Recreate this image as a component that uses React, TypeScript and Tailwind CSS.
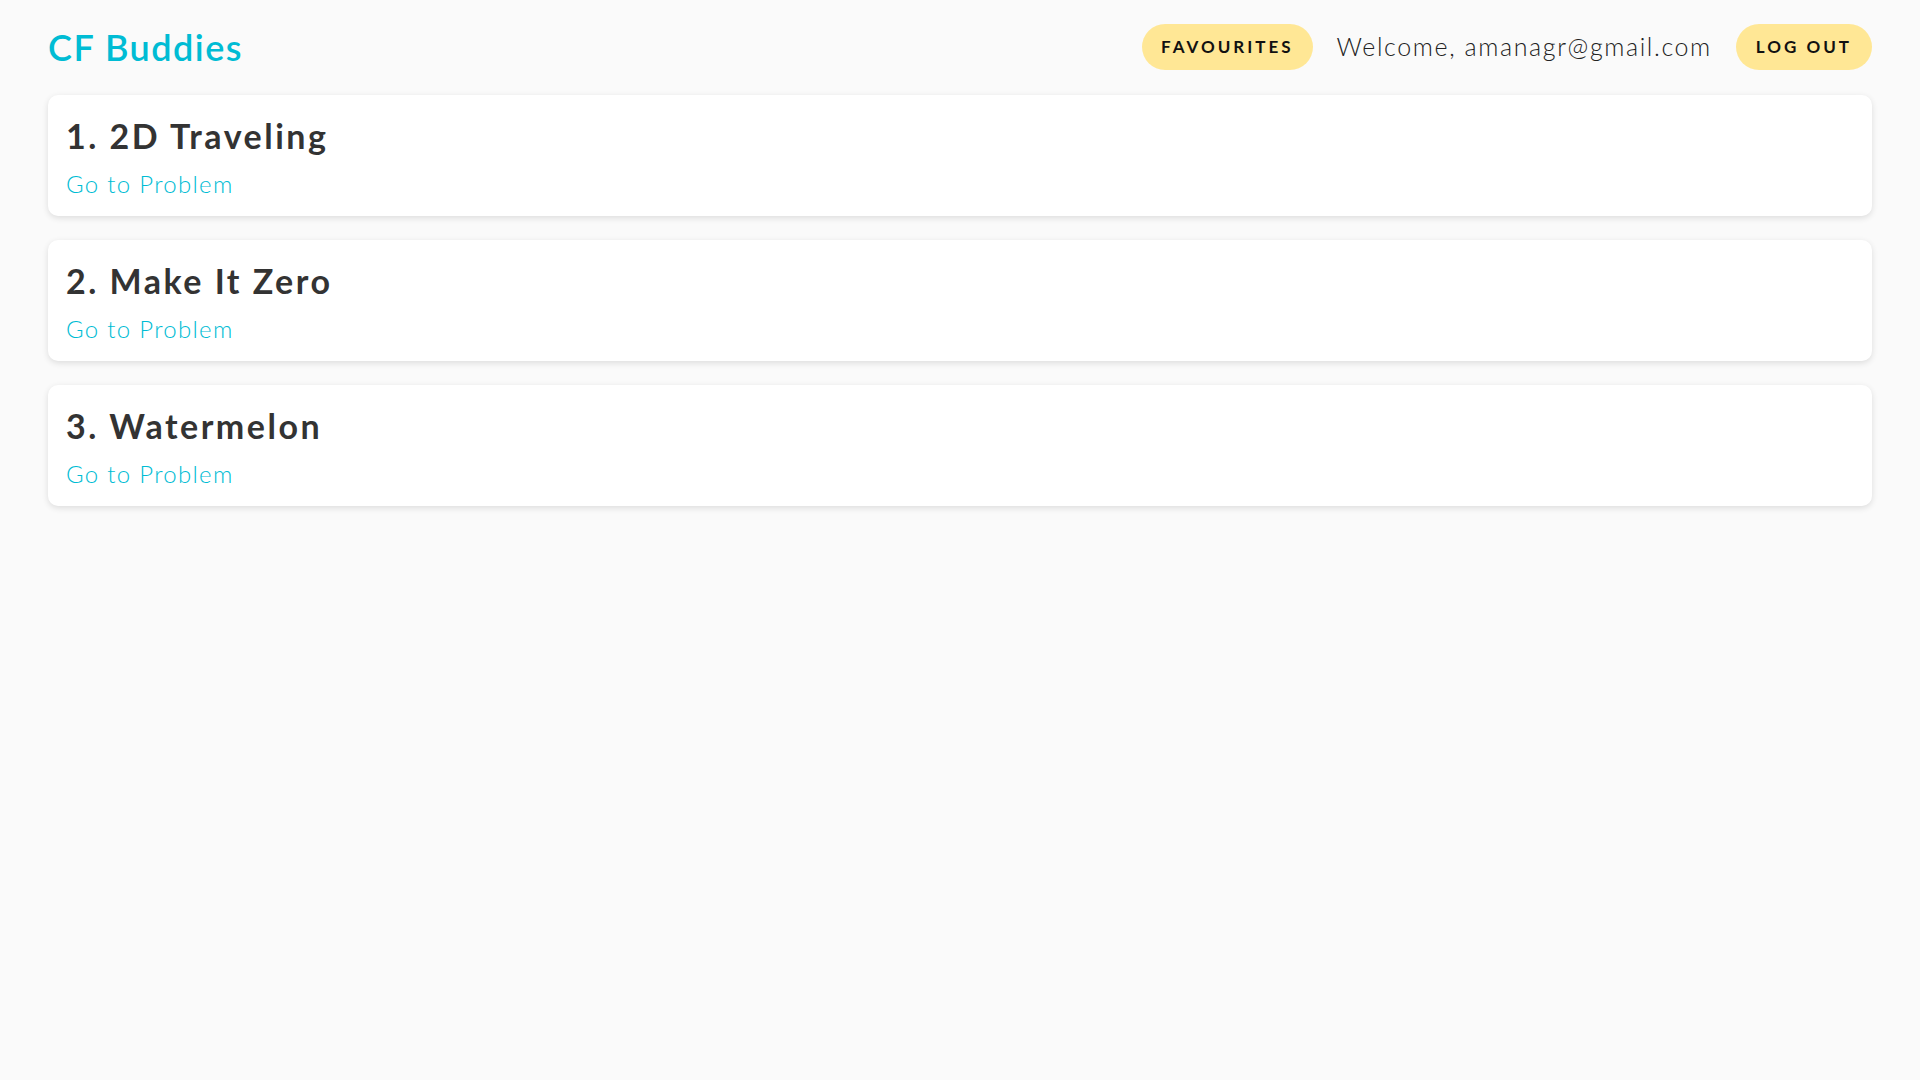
const problems = [
  { id: 1, name: "2D Traveling" },
  { id: 2, name: "Make It Zero" },
  { id: 3, name: "Watermelon" },
];

function Header() {
  return (
    <header className="flex items-center justify-between pt-6 pb-[25px]">
      <h1 className="text-[36px] leading-none font-semibold tracking-[1.5px] text-[#00bcd4]">
        CF Buddies
      </h1>
      <div className="flex items-center gap-6">
        <button className="h-[46px] px-[19px] rounded-full bg-[#ffe795] text-[17px] font-bold tracking-[3px] text-[#111]">
          FAVOURITES
        </button>
        <span className="text-[25px] font-light tracking-[1.6px] text-[#222]">
          Welcome, amanagr@gmail.com
        </span>
        <button className="h-[46px] px-[20px] rounded-full bg-[#ffe795] text-[17px] font-bold tracking-[3px] text-[#111]">
          LOG OUT
        </button>
      </div>
    </header>
  );
}

function ProblemCard({ id, name }: { id: number; name: string }) {
  return (
    <div className="bg-white rounded-[10px] shadow-[0_2px_6px_rgba(0,0,0,0.12)] px-[18px] pt-[20px] pb-[16px]">
      <div className="text-[34px] leading-[42px] font-bold tracking-[2.5px] text-[#333]">
        {id}. {name}
      </div>
      <a href="#" className="block mt-[11px] text-[24px] leading-[32px] font-light tracking-[1.3px] text-[#00bcd4]">
        Go to Problem
      </a>
    </div>
  );
}

export default function App() {
  return (
    <div
      className="min-h-screen bg-[#fafafa] px-12"
      style={{ fontFamily: "Lato, 'Noto Sans', sans-serif" }}
    >
      <Header />
      <div className="flex flex-col gap-6">
        {problems.map((p) => (
          <ProblemCard key={p.id} id={p.id} name={p.name} />
        ))}
      </div>
    </div>
  );
}
